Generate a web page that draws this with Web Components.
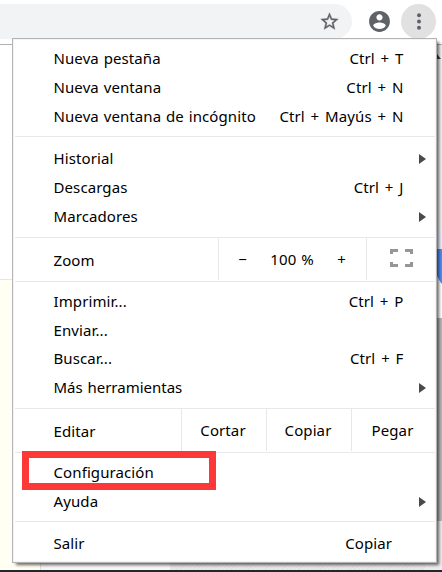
<!DOCTYPE html>
<html lang="es">
<head>
<meta charset="utf-8">
<title>Menú</title>
<style>
    body {
        margin: 0;
        width: 442px;
        height: 572px;
        overflow: hidden;
        background: #fff;
        font: 15px/29px "Noto Sans", "Open Sans", sans-serif;
        letter-spacing: 0.1px;
        word-spacing: 0.8px;
        color: #000;
    }
</style>
</head>
<body>
<browser-window>
    <browser-toolbar></browser-toolbar>
    <page-backdrop></page-backdrop>
    <app-menu slot="overlay">
        <menu-group style="--pad: 5px 0">
            <menu-item keys="Ctrl + T">Nueva pestaña</menu-item>
            <menu-item keys="Ctrl + N">Nueva ventana</menu-item>
            <menu-item keys="Ctrl + Mayús + N">Nueva ventana de incógnito</menu-item>
        </menu-group>
        <menu-group style="--pad: 7px 0 6px">
            <menu-item submenu>Historial</menu-item>
            <menu-item keys="Ctrl + J">Descargas</menu-item>
            <menu-item submenu>Marcadores</menu-item>
        </menu-group>
        <menu-group>
            <menu-actions label="Zoom" style="--columns: 203px 148px 1fr">
                <zoom-control></zoom-control>
                <fullscreen-icon></fullscreen-icon>
            </menu-actions>
        </menu-group>
        <menu-group style="--pad: 5px 0 6px; --row: 28.75px">
            <menu-item keys="Ctrl + P">Imprimir...</menu-item>
            <menu-item>Enviar...</menu-item>
            <menu-item keys="Ctrl + F">Buscar...</menu-item>
            <menu-item submenu style="letter-spacing: 0">Más herramientas</menu-item>
        </menu-group>
        <menu-group>
            <menu-actions label="Editar" style="--columns: 166px 85px 85px 1fr">
                <span>Cortar</span>
                <span>Copiar</span>
                <span>Pegar</span>
            </menu-actions>
        </menu-group>
        <menu-group style="--pad: 5px 0">
            <menu-item marked>Configuración</menu-item>
            <menu-item submenu>Ayuda</menu-item>
        </menu-group>
        <menu-group style="--pad: 7px 0 0">
            <menu-item keys="Copiar" style="--keys-right: 43px">Salir</menu-item>
        </menu-group>
    </app-menu>
</browser-window>

<script>
    class BrowserWindow extends HTMLElement {
        connectedCallback() {
            this.attachShadow({ mode: 'open' });
            this.shadowRoot.innerHTML = `
                <style>
                    :host {
                        display: flex;
                        flex-direction: column;
                        position: relative;
                        width: 442px;
                        height: 572px;
                        overflow: hidden;
                    }

                    ::slotted([slot="overlay"]) {
                        position: absolute;
                        left: 12px;
                        top: 38px;
                    }
                </style>
                <slot></slot>
                <slot name="overlay"></slot>
            `;
        }
    }

    class BrowserToolbar extends HTMLElement {
        connectedCallback() {
            this.attachShadow({ mode: 'open' });
            this.shadowRoot.innerHTML = `
                <style>
                    :host {
                        display: flex;
                        box-sizing: border-box;
                        height: 45px;
                        padding-top: 4px;
                        border-bottom: 1px solid #b0b0b0;
                        background: #fff;
                    }

                    .omnibox {
                        display: flex;
                        align-items: center;
                        justify-content: flex-end;
                        box-sizing: border-box;
                        width: 352px;
                        height: 35px;
                        padding-right: 12.5px;
                        border-radius: 0 18px 18px 0;
                        background: #f1f3f4;
                    }

                    .avatar {
                        margin: 5px 9px 0 15px;
                    }

                    .more {
                        display: flex;
                        align-items: center;
                        justify-content: center;
                        width: 35px;
                        height: 35px;
                        border-radius: 50%;
                        background: #e1e1e1;
                    }

                    svg {
                        display: block;
                        flex: none;
                        fill: #5f6368;
                    }
                </style>
                <div class="omnibox">
                    <svg width="21" height="21" viewBox="0 0 24 24" stroke="#5f6368" stroke-width=".4"><path d="M22 9.24l-7.19-.62L12 2 9.19 8.63 2 9.24l5.46 4.73L5.82 21 12 17.27 18.18 21l-1.63-7.03L22 9.24zM12 15.4l-3.76 2.27 1-4.28-3.32-2.88 4.38-.38L12 6.1l1.71 4.04 4.38.38-3.32 2.88 1 4.28L12 15.4z"/></svg>
                </div>
                <svg class="avatar" width="25" height="25" viewBox="0 0 24 24"><path d="M12 2C6.48 2 2 6.48 2 12s4.48 10 10 10 10-4.48 10-10S17.52 2 12 2zm0 3c1.66 0 3 1.34 3 3s-1.34 3-3 3-3-1.34-3-3 1.34-3 3-3zm0 14.2c-2.5 0-4.71-1.28-6-3.22.03-1.99 4-3.08 6-3.08 1.99 0 5.97 1.09 6 3.08-1.29 1.94-3.5 3.22-6 3.22z"/></svg>
                <div class="more">
                    <svg width="6" height="18" viewBox="0 0 6 18"><circle cx="3" cy="2.300" r="2"/><circle cx="3" cy="8.500" r="2"/><circle cx="3" cy="14.800" r="2"/></svg>
                </div>
            `;
        }
    }

    // Slices of the web page that stay visible around the open menu
    class PageBackdrop extends HTMLElement {
        connectedCallback() {
            this.attachShadow({ mode: 'open' });
            this.shadowRoot.innerHTML = `
                <style>
                    :host {
                        display: flex;
                        flex-direction: column;
                        flex: 1;
                    }

                    .sides {
                        display: flex;
                        justify-content: space-between;
                        height: 517px;
                    }

                    .left {
                        width: 40px;
                        background: linear-gradient(#fff 234px, #e6e6e6 234px 235px, #fffff3 235px);
                    }

                    .right {
                        width: 10px;
                        background: linear-gradient(#f0f0f0 180px, #e8effd 190px 204px, #fff 204px 273px, #b8b8b8 273px 476px, #ededed 476px);
                    }

                    .right svg {
                        display: block;
                    }

                    .strip {
                        display: flex;
                        height: 8px;
                    }

                    .cream { width: 40px; background: #fffff3; }
                    .panel { width: 130px; box-sizing: border-box; border-left: 1px solid #ddd; background: #f7f7f7; }
                    .texture { width: 255px; background: repeating-linear-gradient(135deg, #e2e2e2 0 1px, #e9e9e9 1px 3px); }
                    .rest { flex: 1; background: #ededed; }
                    .dark { height: 2px; background: #25262a; }
                </style>
                <div class="sides">
                    <div class="left"></div>
                    <div class="right">
                        <svg width="10" height="250" viewBox="0 0 10 250">
                            <path d="M5 9l4 5H5z" fill="#404040"/>
                            <path d="M4 204h6v35Q7 236 4 228z" fill="#4e8df5"/>
                        </svg>
                    </div>
                </div>
                <div class="strip">
                    <div class="cream"></div>
                    <div class="panel"></div>
                    <div class="texture"></div>
                    <div class="rest"></div>
                </div>
                <div class="dark"></div>
            `;
        }
    }

    class AppMenu extends HTMLElement {
        connectedCallback() {
            this.attachShadow({ mode: 'open' });
            this.shadowRoot.innerHTML = `
                <style>
                    :host {
                        display: flex;
                        flex-direction: column;
                        box-sizing: border-box;
                        width: 425px;
                        height: 525px;
                        padding: 4px 1px 0 2px;
                        border: 1px solid #b4b4b4;
                        background: #fff;
                        box-shadow: inset 0 0 0 1px #f4f4f4, 3px 3px 3px -1px rgba(0, 0, 0, 0.6);
                    }
                </style>
                <slot></slot>
            `;
        }
    }

    class MenuGroup extends HTMLElement {
        connectedCallback() {
            this.attachShadow({ mode: 'open' });
            this.shadowRoot.innerHTML = `
                <style>
                    :host {
                        display: flex;
                        flex-direction: column;
                        padding: var(--pad, 0);
                        border-top: 1px solid #e8e8e8;
                    }

                    :host(:first-child) {
                        padding-top: 0;
                        border-top-color: transparent;
                    }
                </style>
                <slot></slot>
            `;
        }
    }

    class MenuItem extends HTMLElement {
        connectedCallback() {
            const keys = this.getAttribute('keys');
            this.attachShadow({ mode: 'open' });
            this.shadowRoot.innerHTML = `
                <style>
                    :host {
                        display: flex;
                        align-items: center;
                        justify-content: space-between;
                        position: relative;
                        height: var(--row, 29px);
                        padding-left: 38.5px;
                        white-space: nowrap;
                    }

                    .keys {
                        margin-right: var(--keys-right, 31.5px);
                        word-spacing: 1.8px;
                    }

                    .arrow {
                        margin-right: 9px;
                        border: solid transparent;
                        border-width: 5px 0 5px 7px;
                        border-left-color: #4a4a4a;
                    }

                    .mark {
                        position: absolute;
                        left: 7px;
                        top: -7px;
                        box-sizing: border-box;
                        width: 194px;
                        height: 39px;
                        border: 7px solid #fc3838;
                    }
                </style>
                <span class="label"><slot></slot></span>
                ${keys ? `<span class="keys">${keys}</span>` : ''}
                ${this.hasAttribute('submenu') ? '<span class="arrow"></span>' : ''}
                ${this.hasAttribute('marked') ? '<span class="mark"></span>' : ''}
            `;
        }
    }

    class MenuActions extends HTMLElement {
        connectedCallback() {
            this.attachShadow({ mode: 'open' });
            this.shadowRoot.innerHTML = `
                <style>
                    :host {
                        display: grid;
                        grid-template-columns: var(--columns);
                        align-items: start;
                        height: 43px;
                    }

                    .label {
                        padding-left: 38.5px;
                        line-height: 45px;
                    }

                    ::slotted(*) {
                        box-sizing: border-box;
                        height: 42px;
                        padding-right: 2px;
                        border-left: 1px solid #e8e8e8;
                        line-height: 43px;
                        text-align: center;
                    }
                </style>
                <span class="label">${this.getAttribute('label')}</span>
                <slot></slot>
            `;
        }
    }

    class ZoomControl extends HTMLElement {
        connectedCallback() {
            this.attachShadow({ mode: 'open' });
            this.shadowRoot.innerHTML = `
                <style>
                    :host {
                        display: grid;
                        grid-template-columns: 47px 52px 47px;
                        line-height: 41px;
                        text-align: center;
                        white-space: nowrap;
                    }
                </style>
                <span>−</span>
                <span>100 %</span>
                <span>+</span>
            `;
        }
    }

    class FullscreenIcon extends HTMLElement {
        connectedCallback() {
            this.attachShadow({ mode: 'open' });
            this.shadowRoot.innerHTML = `
                <style>
                    :host {
                        display: flex;
                        align-items: center;
                        justify-content: center;
                    }

                    svg {
                        display: block;
                        margin: 0 0 2px 3px;
                    }
                </style>
                <svg width="23" height="18" viewBox="0 0 23 18" fill="none" stroke="#969696" stroke-width="3"><path d="M1.5 5V1.5H8M15 1.5h6.500V5M21.500 13v3.500H15M8 16.500H1.500V13"/></svg>
            `;
        }
    }

    customElements.define('browser-window', BrowserWindow);
    customElements.define('browser-toolbar', BrowserToolbar);
    customElements.define('page-backdrop', PageBackdrop);
    customElements.define('app-menu', AppMenu);
    customElements.define('menu-group', MenuGroup);
    customElements.define('menu-item', MenuItem);
    customElements.define('menu-actions', MenuActions);
    customElements.define('zoom-control', ZoomControl);
    customElements.define('fullscreen-icon', FullscreenIcon);
</script>
</body>
</html>
